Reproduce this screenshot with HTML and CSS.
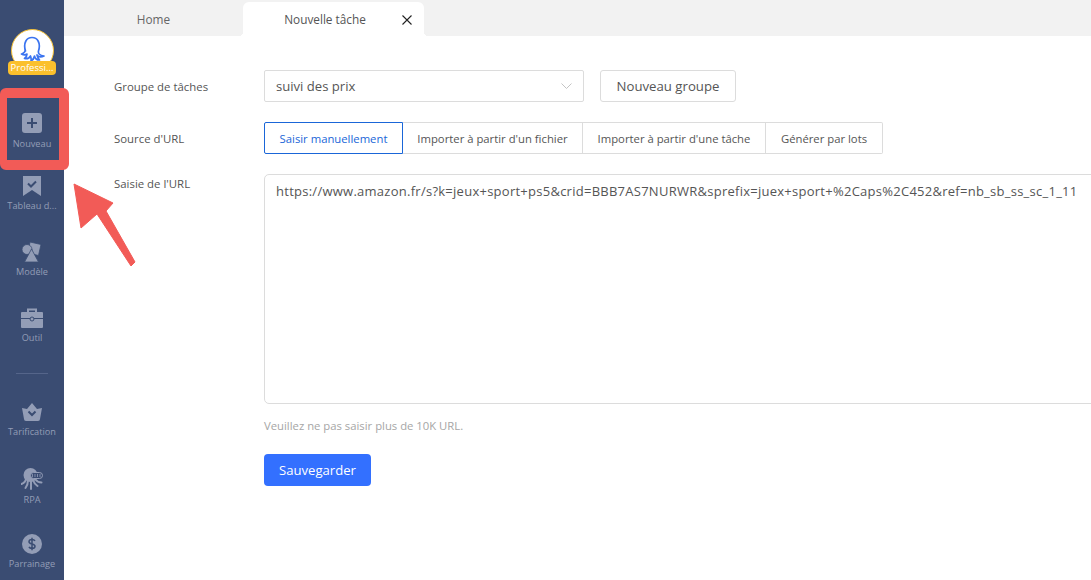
FILE: index.html
```html
<!DOCTYPE html>
<html lang="fr">
<head>
<meta charset="utf-8">
<title>Nouvelle tâche</title>
<link rel="stylesheet" href="styles.css">
</head>
<body>
<div class="app">
  <nav class="sidebar">
    <div class="avatar">
      <div class="avatar-circle">
        <svg class="octopus" width="26" height="26" viewBox="0 0 26 26" fill="none" stroke="#3b74f0" stroke-width="1.700" stroke-linecap="round" stroke-linejoin="round"><path d="M6.500 15C4 7 7.500 1.500 13 1.500S22 7 19.500 15c-.5 2.500 1 4.500 5.500 5-3 1.500-5.500 1-7-1 .5 2 1 3.500 2.500 5-3 0-4.500-1.500-5-4-.5 2.500-1.500 4-3.500 5 .3-2 .2-3.500-.5-5-1 2-3.500 3-6 2.500 1.500-1 2.500-2.500 2.500-4.500-1.500 1-3.500 1-5.500 0 2.500-.5 4-2.500 3.500-4.500z"/></svg>
      </div>
      <span class="badge">Professi...</span>
    </div>
    <a class="item item-new">
      <svg width="20" height="20" viewBox="0 0 20 20"><rect width="20" height="20" rx="3" fill="#939db6"/><path d="M10 5v10M5 10h10" stroke="#3a4c72" stroke-width="2"/></svg>
      <span>Nouveau</span>
    </a>
    <a class="item item-board">
      <svg width="18" height="20" viewBox="0 0 18 20"><path d="M0 0h18v20l-9-6-9 6z" fill="#939db6"/><path d="M5 7.500l3 3 5-5" fill="none" stroke="#3a4c72" stroke-width="2"/></svg>
      <span>Tableau d...</span>
    </a>
    <a class="item">
      <svg width="20" height="20" viewBox="0 0 20 20" fill="#939db6" stroke="#3a4c72" stroke-width=".8"><path d="M8 0l11 2.500-2.500 11L6 11z"/><circle cx="5" cy="7.500" r="5"/><path d="M9.500 7L16.500 20H2.500z"/></svg>
      <span>Modèle</span>
    </a>
    <a class="item item-tool">
      <svg width="22" height="20" viewBox="0 0 22 20"><path d="M7 4V1.500h8V4" fill="none" stroke="#939db6" stroke-width="2"/><path d="M1 4h20a1 1 0 0 1 1 1v5H0V5a1 1 0 0 1 1-1zM0 11h22v8a1 1 0 0 1-1 1H1a1 1 0 0 1-1-1z" fill="#939db6"/><circle cx="11" cy="11" r="2" fill="#939db6" stroke="#3a4c72"/></svg>
      <span>Outil</span>
    </a>
    <div class="divider"></div>
    <a class="item item-price">
      <svg width="20" height="18" viewBox="0 0 20 18"><path d="M0 5l5 1 5-6 5 6 5-1-2 11a2 2 0 0 1-2 2H4a2 2 0 0 1-2-2z" fill="#939db6"/><path d="M6.500 8.500L10 12l3.500-3.500" fill="none" stroke="#3a4c72" stroke-width="2"/></svg>
      <span>Tarification</span>
    </a>
    <a class="item item-rpa">
      <svg width="22" height="22" viewBox="0 0 22 22"><circle cx="9.500" cy="7" r="7" fill="#939db6"/><path d="M5 10c0 3-2 5-4.500 6M7 12c0 3-1 6-2.500 8M10 13v8M12 12c1 3 3 5 4.500 6M14 11c1.500 2 4 3.500 6.500 3.500" fill="none" stroke="#939db6" stroke-width="2" stroke-linecap="round"/><rect x="9.500" y="4.500" width="12" height="6" rx="3" fill="#3a4c72" stroke="#939db6"/><path d="M11.500 6v3M14 6v3M16.500 6v3M19 6v3" stroke="#939db6" stroke-width=".8"/></svg>
      <span>RPA</span>
    </a>
    <a class="item">
      <svg width="20" height="20" viewBox="0 0 20 20"><circle cx="10" cy="10" r="10" fill="#939db6"/><path d="M13 7c-.5-1-1.500-1.500-3-1.500S7 6.200 7 7.700c0 3 6 1.600 6 4.600 0 1.500-1.500 2.200-3 2.200s-2.600-.6-3-1.600M10 3.800v12.400" fill="none" stroke="#3a4c72" stroke-width="1.500"/></svg>
      <span>Parrainage</span>
    </a>
  </nav>
  <main class="main">
    <div class="tabs">
      <div class="tab">Home</div>
      <div class="tab tab-active">
        <span>Nouvelle tâche</span>
        <svg class="close" width="10" height="10" viewBox="0 0 10 10"><path d="M.5.500l9 9M9.500.500l-9 9" stroke="#222" stroke-width="1.100"/></svg>
      </div>
    </div>
    <form class="form">
      <div class="row row-group">
        <label class="label">Groupe de tâches</label>
        <div class="select">
          <span>suivi des prix</span>
          <svg width="11" height="6" viewBox="0 0 11 6"><path d="M.5.500l5 5 5-5" fill="none" stroke="#c4c4c4"/></svg>
        </div>
        <button type="button" class="btn-outline">Nouveau groupe</button>
      </div>
      <div class="row row-source">
        <label class="label">Source d'URL</label>
        <div class="segments">
          <div class="segment segment-active">Saisir manuellement</div>
          <div class="segment">Importer à partir d'un fichier</div>
          <div class="segment">Importer à partir d'une tâche</div>
          <div class="segment">Générer par lots</div>
        </div>
      </div>
      <div class="row row-url">
        <label class="label label-top">Saisie de l'URL</label>
        <div class="url-col">
          <div class="textarea">https://www.amazon.fr/s?k=jeux+sport+ps5&amp;crid=BBB7AS7NURWR&amp;sprefix=juex+sport+%2Caps%2C452&amp;ref=nb_sb_ss_sc_1_11</div>
          <p class="hint">Veuillez ne pas saisir plus de 10K URL.</p>
          <button type="button" class="btn-primary">Sauvegarder</button>
        </div>
      </div>
    </form>
  </main>
  <svg class="annotation" width="140" height="270" viewBox="0 0 140 270">
    <path fill-rule="evenodd" d="M6 88h57a6 6 0 0 1 6 6v70a6 6 0 0 1-6 6H6a6 6 0 0 1-6-6V94a6 6 0 0 1 6-6zM7 98v62h52V98z" fill="#f25b57"/>
    <path d="M74 184L113 203 106 211 135 262 131 266 97 214 81 228z" fill="#f25b57" stroke="#f25b57" stroke-linejoin="round" stroke-width="1"/>
  </svg>
</div>
</body>
</html>
```

FILE: styles.css
```css
* { box-sizing: border-box; }
html, body { margin: 0; height: 100%; overflow: hidden; }
body { font-family: "Open Sans", "Noto Sans", sans-serif; font-size: 12px; color: #555; background: #fff; }
.app { position: relative; display: flex; width: 1091px; height: 580px; overflow: hidden; }

.sidebar { flex: none; width: 64px; height: 580px; background: #3a4c72; display: flex; flex-direction: column; align-items: center; padding-top: 29px; color: #939db6; }
.avatar { position: relative; width: 48px; height: 46px; margin-bottom: 38px; display: flex; justify-content: center; }
.avatar-circle { width: 43px; height: 43px; border-radius: 50%; background: #fff; border: 1px solid #f8c234; display: flex; align-items: flex-start; justify-content: center; padding-top: 6px; }
.badge { position: absolute; left: 0; top: 32px; width: 48px; height: 14px; line-height: 14px; border-radius: 4px; background: #fbc02d; color: #fff; font-size: 9.500px; text-align: center; white-space: nowrap; }
.item { width: 64px; height: 66px; flex: none; display: flex; flex-direction: column; align-items: center; color: #939db6; font-size: 9.200px; line-height: 14px; white-space: nowrap; }
.item svg { flex: none; }
.item span { margin-top: 3px; }
.item-new { height: 63px; margin-top: 3px; }
.item-new span { margin-top: 4px; }
.item-board { height: 66px; }
.item-tool { height: 65px; }
.item-price { height: 65px; }
.item-price span { margin-top: 4px; }
.item-rpa { height: 66px; }
.divider { flex: none; width: 32px; height: 1px; background: #55658a; margin: 0 0 29px; }

.main { flex: 1; min-width: 0; overflow: hidden; }
.tabs { display: flex; align-items: flex-end; height: 36px; background: #f2f2f2; }
.tab { width: 179px; height: 34px; display: flex; align-items: center; justify-content: center; font-size: 11.800px; color: #666; }
.tab-active { position: relative; width: 181px; background: #fff; border-radius: 6px 6px 0 0; color: #555; padding-right: 17px; }
.tab-active::before, .tab-active::after { content: ""; position: absolute; bottom: 0; width: 4px; height: 4px; }
.tab-active::before { left: -4px; background: radial-gradient(circle at 0 0, transparent 4px, #fff 4px); }
.tab-active::after { right: -4px; background: radial-gradient(circle at 100% 0, transparent 4px, #fff 4px); }
.close { position: absolute; right: 12px; top: 13px; }

.form { padding: 34px 0 0 50px; }
.row { display: flex; align-items: center; }
.label { flex: none; width: 150px; font-size: 11.400px; color: #555; }
.row-source { margin-top: 20px; }
.row-url { margin-top: 20px; align-items: flex-start; }
.label-top { padding-top: 1px; line-height: 18px; }

.select { width: 320px; height: 32px; border: 1px solid #dcdcdc; border-radius: 2px; display: flex; align-items: center; justify-content: space-between; padding: 0 11px; font-size: 13.100px; color: #555; }
.btn-outline { margin-left: 16px; width: 136px; height: 32px; border: 1px solid #dcdcdc; border-radius: 3px; background: #fff; font: inherit; font-size: 13.200px; color: #555; padding: 0; }

.segments { display: grid; grid-template-columns: 139px 180px 183px 117px; height: 32px; }
.segment { height: 32px; line-height: 31px; text-align: center; border: 1px solid #dcdcdc; border-left: 0; font-size: 11.300px; color: #555; white-space: nowrap; }
.segment:last-child { border-radius: 0 2px 2px 0; }
.segment-active { border: 1px solid #1a66d8; border-radius: 2px 0 0 2px; color: #1a66d8; }

.url-col { flex: none; width: 840px; }
.textarea { height: 230px; border: 1px solid #dcdcdc; border-radius: 5px; padding: 7px 11px; font-size: 13px; letter-spacing: .26px; line-height: 18px; color: #555; white-space: nowrap; }
.hint { margin: 14px 0 0; font-size: 11.300px; line-height: 15px; color: #a6a6a6; }
.btn-primary { display: block; margin-top: 21px; width: 107px; height: 32px; border: 0; border-radius: 4px; background: #3370ff; color: #fff; font: inherit; font-size: 13.100px; padding: 0; }

.annotation { position: absolute; left: 0; top: 0; pointer-events: none; }
```
